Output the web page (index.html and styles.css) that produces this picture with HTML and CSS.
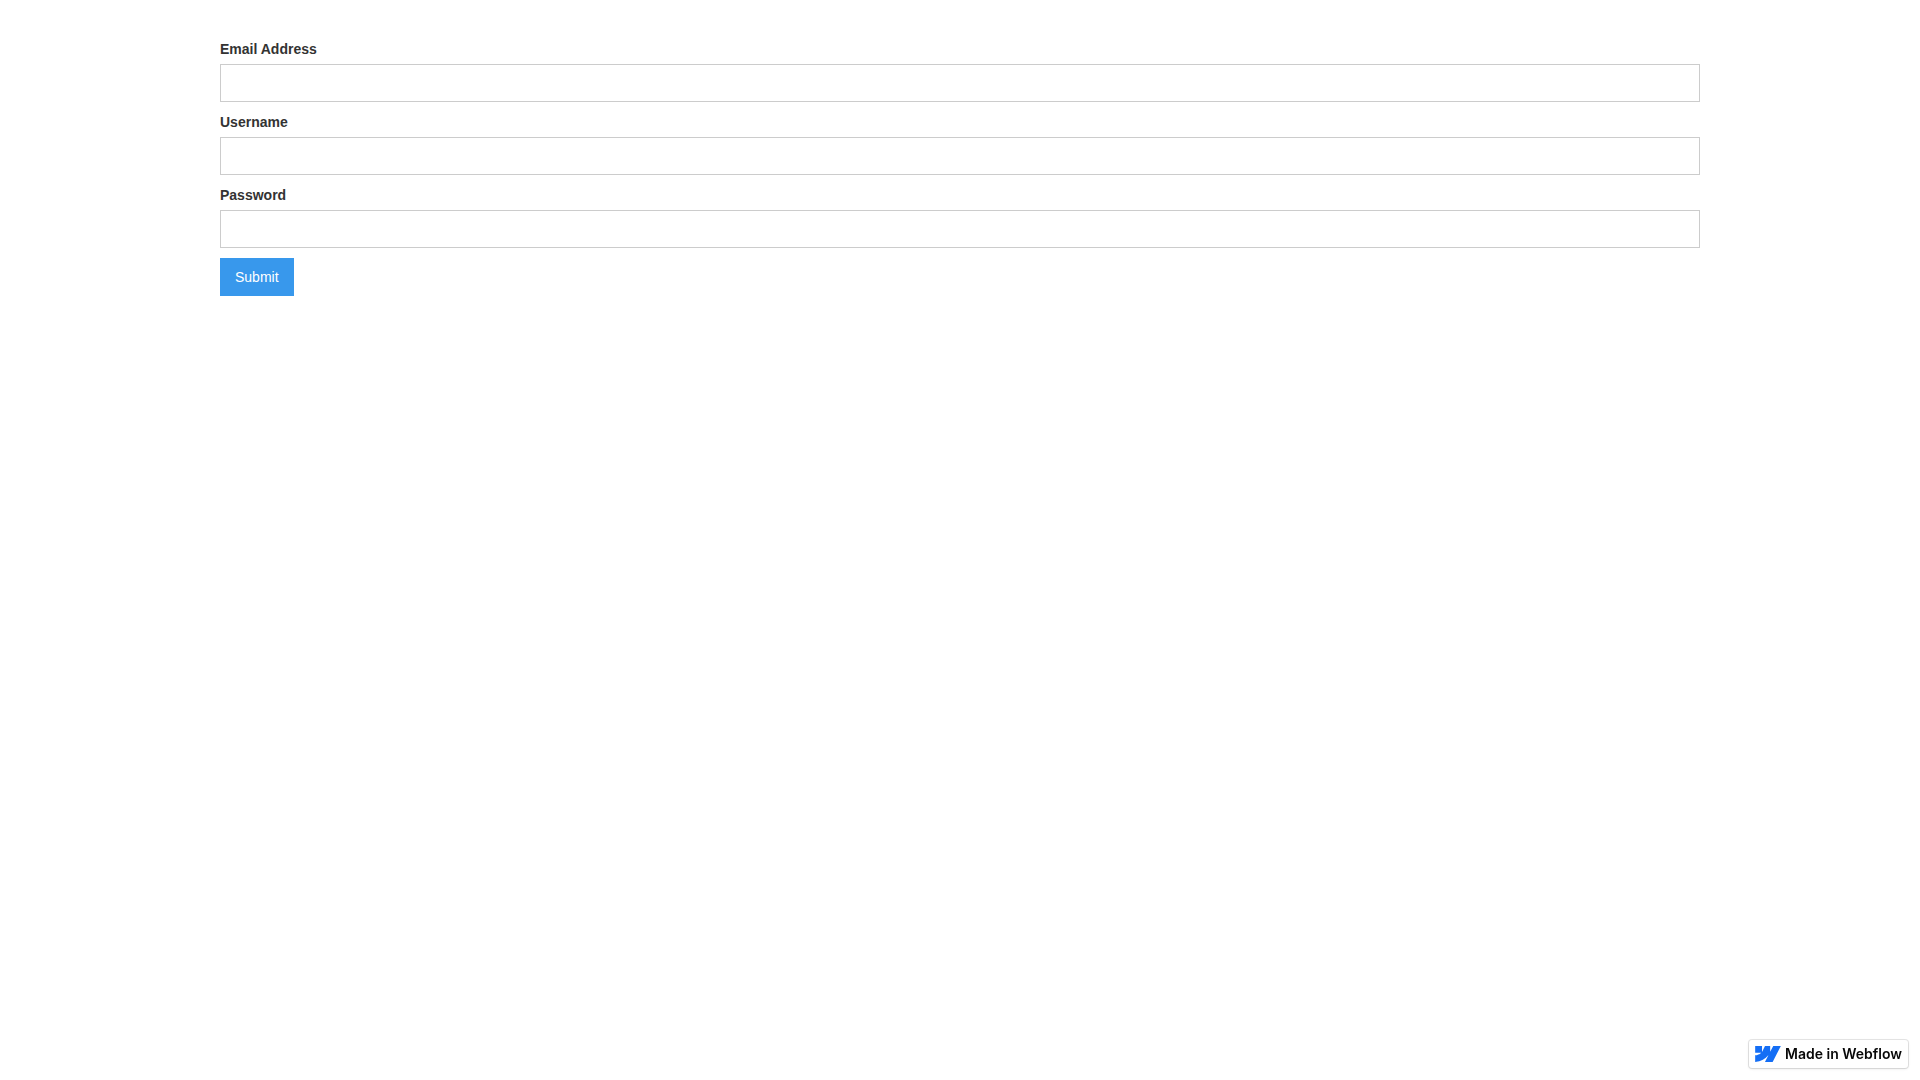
FILE: index.html
```html
<!DOCTYPE html>
<html lang="en">
<head>
  <meta charset="utf-8">
  <meta name="viewport" content="width=device-width, initial-scale=1">
  <title>Sign up</title>
  <link rel="stylesheet" href="styles.css">
</head>
<body>
  <main class="container">
    <form class="form">
      <label class="label" for="email">Email Address</label>
      <input class="input" type="email" id="email" name="email">
      <label class="label" for="username">Username</label>
      <input class="input" type="text" id="username" name="username">
      <label class="label" for="password">Password</label>
      <input class="input" type="password" id="password" name="password">
      <button class="button" type="submit">Submit</button>
    </form>
  </main>
  <a class="badge" href="https://webflow.com">
    <svg class="badge-logo" viewBox="0 4.515 24 14.97" aria-hidden="true">
      <path fill="#146ef5" d="m24 4.515-7.658 14.97H9.149l3.205-6.204h-.144C9.566 16.713 5.621 18.973 0 19.485v-6.118s3.596-.213 5.71-2.435H0V4.515h6.417v5.278l.144-.001 2.622-5.277h4.854v5.244h.144l2.72-5.244H24Z"/>
    </svg>
    <span>Made in Webflow</span>
  </a>
</body>
</html>
```

FILE: styles.css
```css
* {
  box-sizing: border-box;
}

body {
  margin: 0;
  background: #fff;
  color: #333;
  font-family: Arial, "Liberation Sans", sans-serif;
  font-size: 14px;
  line-height: 20px;
}

.container {
  max-width: 1520px;
  margin: 0 auto;
  padding: 39px 20px;
}

.form {
  display: flex;
  flex-direction: column;
  align-items: flex-start;
}

.label {
  margin-bottom: 5px;
  font-weight: bold;
}

.input {
  width: 100%;
  height: 38px;
  margin: 0 0 10px;
  padding: 8px 12px;
  border: 1px solid #ccc;
  border-radius: 0;
  background: #fff;
  color: #333;
  font: inherit;
}

.button {
  padding: 9px 15px;
  border: 0;
  background: #3898ec;
  color: #fff;
  font: inherit;
  cursor: pointer;
}

.badge {
  position: fixed;
  right: 12px;
  bottom: 12px;
  display: flex;
  align-items: center;
  gap: 4px;
  padding: 6px;
  border-radius: 3px;
  background: #fff;
  box-shadow: 0 0 0 1px rgba(0, 0, 0, 0.1), 0 1px 3px rgba(0, 0, 0, 0.1);
  color: #080808;
  font-family: Inter, sans-serif;
  font-size: 14px;
  font-weight: 600;
  line-height: 16px;
  text-decoration: none;
  white-space: nowrap;
}

.badge-logo {
  width: 26px;
  height: 16px;
}
```
